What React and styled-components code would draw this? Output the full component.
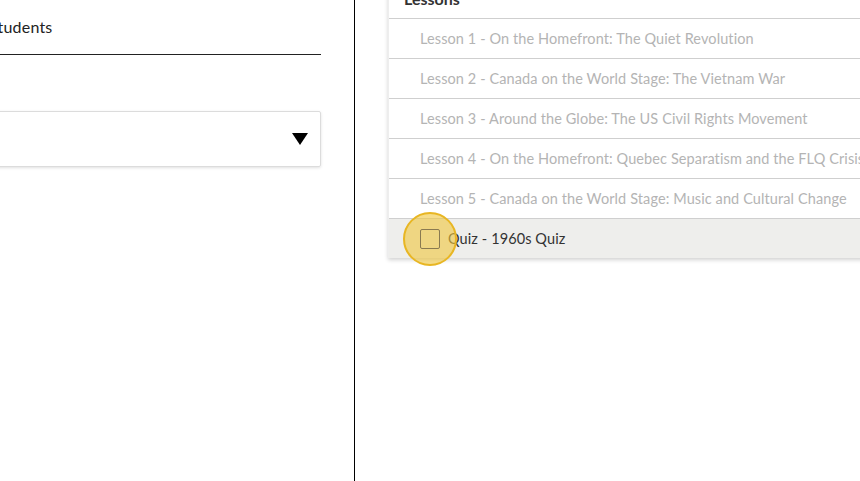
import React from 'react'
import styled, { createGlobalStyle } from 'styled-components';

const GlobalStyle = createGlobalStyle`
  html, body {
    margin: 0;
    padding: 0;
    background: #fff;
    overflow: hidden;
  }
  body {
    font-family: Lato, "Noto Sans", sans-serif;
  }
`;

const lessons = [
  'Lesson 1 - On the Homefront: The Quiet Revolution',
  'Lesson 2 - Canada on the World Stage: The Vietnam War',
  'Lesson 3 - Around the Globe: The US Civil Rights Movement',
  'Lesson 4 - On the Homefront: Quebec Separatism and the FLQ Crisis',
  'Lesson 5 - Canada on the World Stage: Music and Cultural Change',
];

const App = () => {
  return (
    <Page>
      <GlobalStyle />
      <LeftPanel>
        <LeftInner>
          <Title>Students</Title>
          <SelectBox>
            <Arrow />
          </SelectBox>
        </LeftInner>
      </LeftPanel>
      <RightPanel>
        <Card>
          <CardHeader>Lessons</CardHeader>
          {lessons.map((l) => (
            <Row key={l}>{l}</Row>
          ))}
          <Row active>
            <CheckWrap>
              <Highlight />
              <Check />
            </CheckWrap>
            <span>Quiz - 1960s Quiz</span>
          </Row>
        </Card>
      </RightPanel>
    </Page>
  )
}

export default App

const Page = styled.div`
  display: flex;
  width: 860px;
  height: 481px;
  overflow: hidden;
`;

const LeftPanel = styled.div`
  width: 354px;
  flex-shrink: 0;
  border-right: 1px solid #000;
  overflow: hidden;
`;

const LeftInner = styled.div`
  margin-left: -11px;
  width: 332px;
`;

const Title = styled.div`
  height: 55px;
  box-sizing: border-box;
  padding-top: 17px;
  font-size: 16px;
  letter-spacing: 0.2px;
  color: #222;
  border-bottom: 1px solid #222;
`;

const SelectBox = styled.div`
  margin-top: 56px;
  height: 56px;
  box-sizing: border-box;
  border: 1px solid #dcdcdc;
  border-radius: 2px;
  box-shadow: 0 1px 3px rgba(0, 0, 0, 0.12);
  display: flex;
  align-items: center;
  justify-content: flex-end;
  padding-right: 12px;
`;

const Arrow = styled.div`
  width: 0;
  height: 0;
  border-left: 8px solid transparent;
  border-right: 8px solid transparent;
  border-top: 12px solid #000;
`;

const RightPanel = styled.div`
  flex: 1;
  padding-left: 33px;
  overflow: hidden;
`;

const Card = styled.div`
  margin-top: -22px;
  width: 520px;
  background: #fff;
  border-left: 1px solid #eee;
  box-shadow: 0 2px 4px rgba(0, 0, 0, 0.18);
`;

const CardHeader = styled.div`
  height: 40px;
  box-sizing: border-box;
  padding-left: 15px;
  display: flex;
  align-items: center;
  font-size: 16px;
  font-weight: 700;
  color: #333;
`;

const Row = styled.div`
  height: 40px;
  box-sizing: border-box;
  border-top: 1px solid #cfcfcf;
  padding-left: 31px;
  display: flex;
  align-items: center;
  gap: 8px;
  font-size: 14.5px;
  letter-spacing: 0.1px;
  white-space: nowrap;
  color: ${(p) => (p.active ? '#333' : '#b4b4b4')};
  background: ${(p) => (p.active ? '#eeeeec' : '#fff')};
`;

const CheckWrap = styled.div`
  position: relative;
  width: 20px;
  height: 20px;
`;

const Check = styled.div`
  position: relative;
  width: 20px;
  height: 20px;
  box-sizing: border-box;
  border: 1px solid #8a7a50;
  border-radius: 2px;
`;

const Highlight = styled.div`
  position: absolute;
  left: -17px;
  top: -17px;
  width: 54px;
  height: 54px;
  box-sizing: border-box;
  border-radius: 50%;
  border: 2px solid #e8b623;
  background: rgba(240, 198, 60, 0.6);
`;
